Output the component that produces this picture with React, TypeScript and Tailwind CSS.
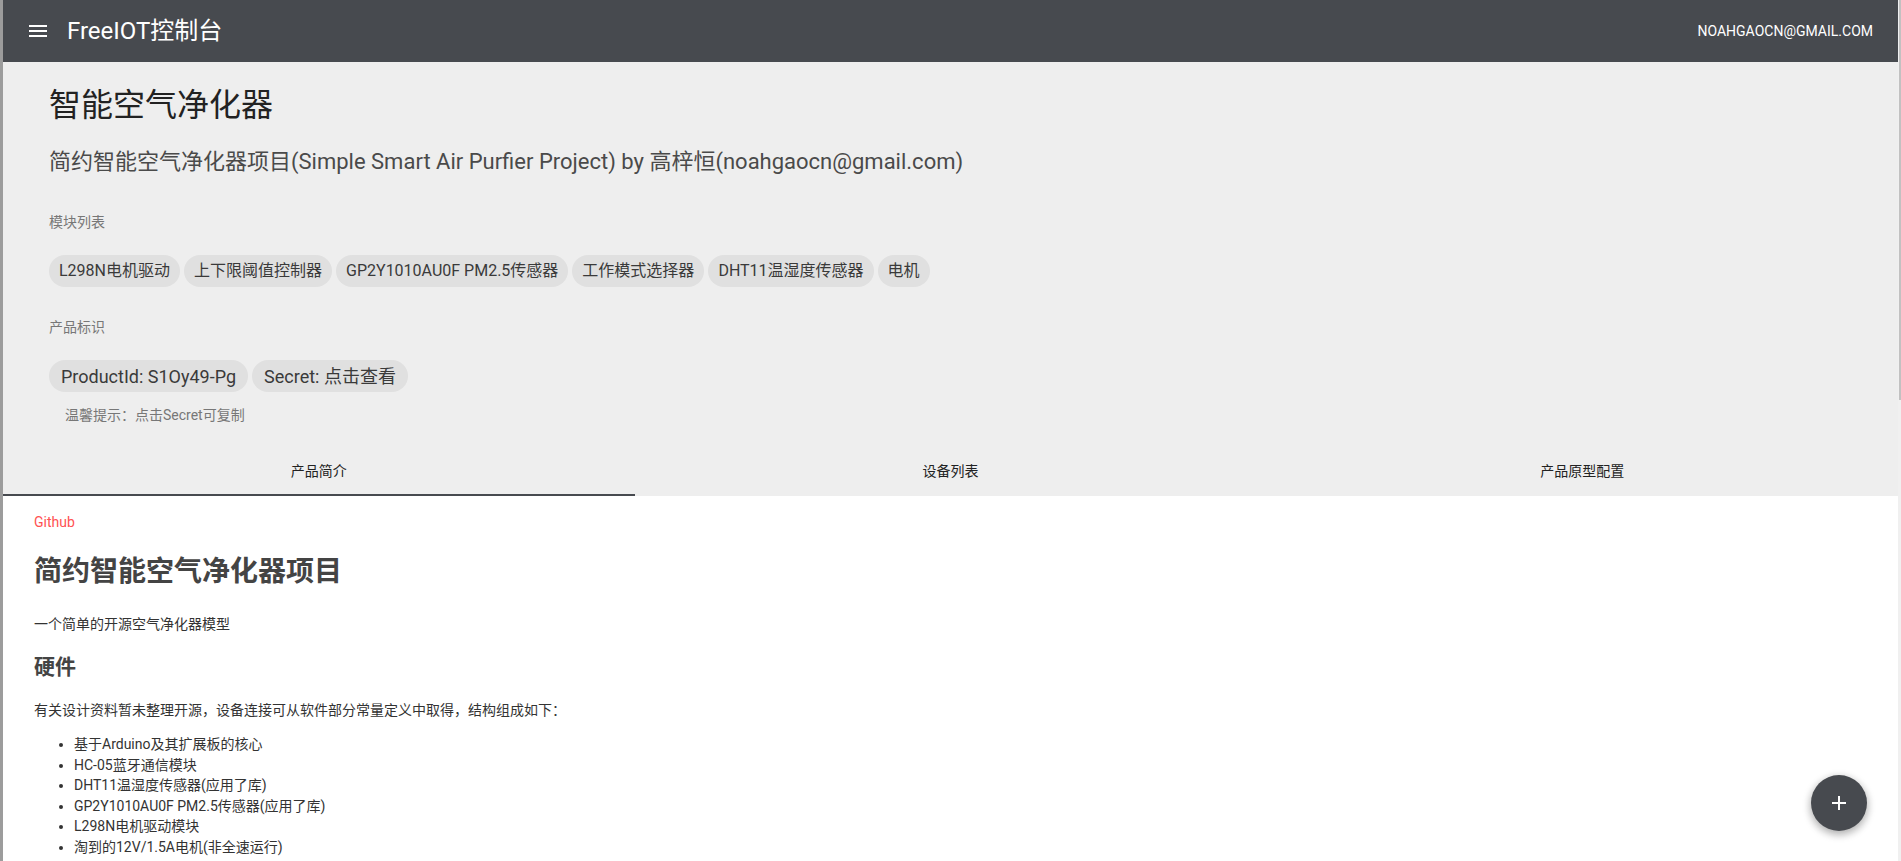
import React, { useState } from 'react';

const modules = ['L298N电机驱动', '上下限阈值控制器', 'GP2Y1010AU0F PM2.5传感器', '工作模式选择器', 'DHT11温湿度传感器', '电机'];

const hardware = [
  '基于Arduino及其扩展板的核心',
  'HC-05蓝牙通信模块',
  'DHT11温湿度传感器(应用了库)',
  'GP2Y1010AU0F PM2.5传感器(应用了库)',
  'L298N电机驱动模块',
  '淘到的12V/1.5A电机(非全速运行)',
];

const tabs = ['产品简介', '设备列表', '产品原型配置'];

function MenuIcon() {
  return (
    <svg width="24" height="24" viewBox="0 0 24 24" fill="#fff">
      <path d="M3 18h18v-2H3v2zm0-5h18v-2H3v2zm0-7v2h18V6H3z" />
    </svg>
  );
}

function Chip({ label, big }: { label: string; big?: boolean }) {
  return (
    <span
      className={`inline-flex items-center h-8 rounded-full bg-[#e0e0e0] text-[#3a3a3a] whitespace-nowrap ${
        big ? 'text-[18px] px-3' : 'text-[16px] px-[10px]'
      }`}
    >
      {label}
    </span>
  );
}

export default function App() {
  const [tab, setTab] = useState(0);

  return (
    <div className="h-screen overflow-hidden flex bg-white font-[Roboto,'Noto_Sans_CJK_SC',sans-serif]">
      {/* window edge */}
      <div className="w-[3px] shrink-0 bg-[#9c9c9c]" />

      <div className="flex-1 min-w-0 flex flex-col">
        {/* App bar */}
        <header className="h-[62px] shrink-0 bg-[#474a4f] flex items-center pl-[23px] pr-[25px]">
          <MenuIcon />
          <h1 className="ml-[17px] text-[24px] text-white leading-none">FreeIOT控制台</h1>
          <span className="ml-auto text-[14px] text-white uppercase">noahgaocn@gmail.com</span>
        </header>

        {/* Product header */}
        <section className="bg-[#eeeeee] pl-[46px] pt-[23px]">
          <h2 className="text-[32px] leading-[40px] text-[#222]">智能空气净化器</h2>
          <p className="mt-[22px] text-[22px] leading-[30px] text-[#4a4a4a]">
            简约智能空气净化器项目(Simple Smart Air Purfier Project) by 高梓恒(noahgaocn@gmail.com)
          </p>

          <div className="mt-[35px] text-[14px] leading-[20px] text-[#777]">模块列表</div>
          <div className="mt-[23px] flex flex-wrap gap-1">
            {modules.map(m => (
              <Chip key={m} label={m} />
            ))}
          </div>

          <div className="mt-[30px] text-[14px] leading-[20px] text-[#777]">产品标识</div>
          <div className="mt-[23px] flex gap-1">
            <Chip big label="ProductId: S1Oy49-Pg" />
            <Chip big label="Secret: 点击查看" />
          </div>
          <div className="mt-[13px] pl-4 text-[14px] leading-[20px] text-[#777]">温馨提示：点击Secret可复制</div>
        </section>

        {/* Tabs */}
        <div className="bg-[#eeeeee] pt-[24px]">
          <div className="flex h-[45px]">
            {tabs.map((t, i) => (
              <button
                key={t}
                onClick={() => setTab(i)}
                className="flex-1 text-[14px] text-[#222] flex items-center justify-center"
              >
                {t}
              </button>
            ))}
          </div>
          <div className="flex h-[2px]">
            {tabs.map((t, i) => (
              <div key={t} className={`flex-1 ${tab === i ? 'bg-[#474a4f]' : ''}`} />
            ))}
          </div>
        </div>

        {/* Readme */}
        <article className="flex-1 bg-white pl-[31px] pt-[16px] text-[14px] text-[#333]">
          <a className="block leading-[20px] text-[#ff5252]">Github</a>
          <h1 className="mt-[22px] text-[28px] leading-[36px] font-bold text-[#444]">简约智能空气净化器项目</h1>
          <p className="mt-[24px] leading-[20px]">一个简单的开源空气净化器模型</p>
          <h2 className="mt-[19px] text-[21px] leading-[28px] font-bold text-[#444]">硬件</h2>
          <p className="mt-[19px] leading-[20px]">有关设计资料暂未整理开源，设备连接可从软件部分常量定义中取得，结构组成如下：</p>
          <ul className="mt-[14px] pl-10 list-disc leading-[20.6px]">
            {hardware.map(h => (
              <li key={h}>{h}</li>
            ))}
          </ul>
        </article>
      </div>

      {/* scrollbar strip */}
      <div className="w-[3px] shrink-0 bg-[#f0f0f0] flex justify-end">
        <div className="w-[2px] h-[400px] bg-[#c1c1c1]" />
      </div>

      <button className="fixed bottom-[30px] right-[34px] w-14 h-14 rounded-full bg-[#474a4f] flex items-center justify-center shadow-[0_3px_10px_rgba(0,0,0,0.16),0_3px_10px_rgba(0,0,0,0.23)]">
        <svg width="24" height="24" viewBox="0 0 24 24" fill="#fff">
          <path d="M19 13h-6v6h-2v-6H5v-2h6V5h2v6h6v2z" />
        </svg>
      </button>
    </div>
  );
}
